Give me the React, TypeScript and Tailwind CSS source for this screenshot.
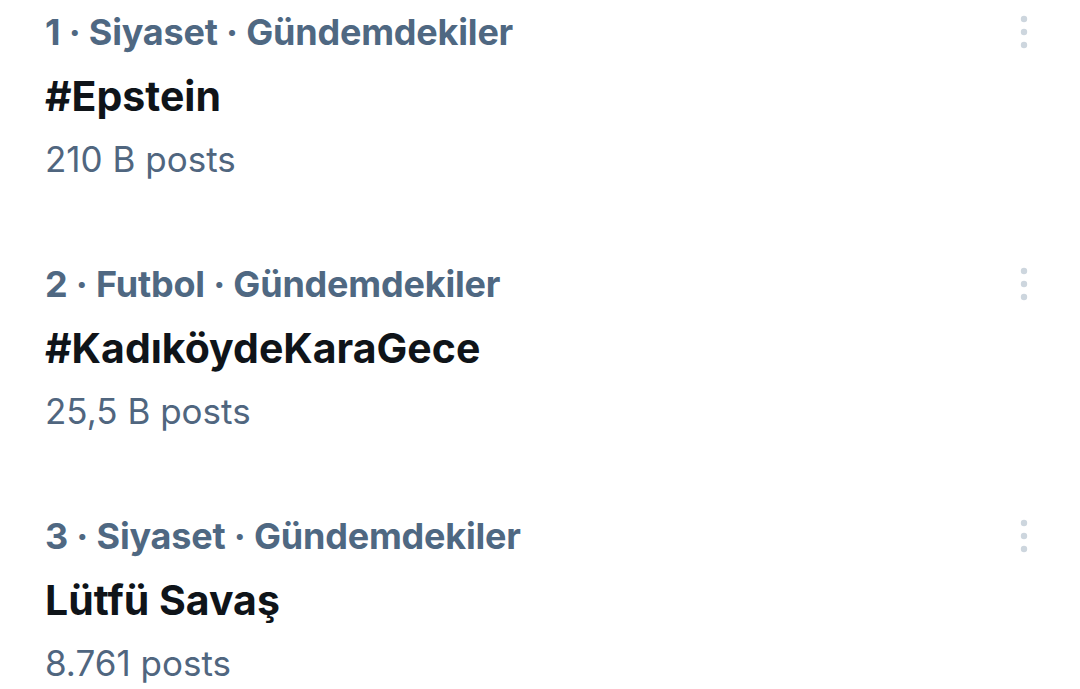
import React from "react";

const items = [
  { cat: "1 · Siyaset · Gündemdekiler", title: "#Epstein", posts: "210 B posts" },
  { cat: "2 · Futbol · Gündemdekiler", title: "#KadıköydeKaraGece", posts: "25,5 B posts" },
  { cat: "3 · Siyaset · Gündemdekiler", title: "Lütfü Savaş", posts: "8.761 posts" },
];

function Dots() {
  return (
    <svg width="12" height="36" viewBox="0 0 12 36" className="block">
      <circle cx="6" cy="5" r="3.2" fill="#cdd6de" />
      <circle cx="6" cy="18" r="3.2" fill="#cdd6de" />
      <circle cx="6" cy="31" r="3.2" fill="#cdd6de" />
    </svg>
  );
}

export default function App() {
  return (
    <div className="w-[1080px] h-[689px] overflow-hidden bg-white font-['Inter',sans-serif]">
      {items.map((it, i) => (
        <div key={i} className="h-[252px] pl-[45px] pr-[50px] flex">
          <div className="flex-1 flex flex-col">
            <div className="h-[64px] flex items-center text-[36px] font-bold text-[#4f6882] tracking-[-0.2px]">
              {it.cat}
            </div>
            <div className="h-[66px] flex items-center text-[41px] font-bold text-[#0f1419]">
              {it.title}
            </div>
            <div className="h-[58px] flex items-center text-[35px] text-[#50667f]">
              {it.posts}
            </div>
          </div>
          <div className="pt-[14px]">
            <Dots />
          </div>
        </div>
      ))}
    </div>
  );
}
